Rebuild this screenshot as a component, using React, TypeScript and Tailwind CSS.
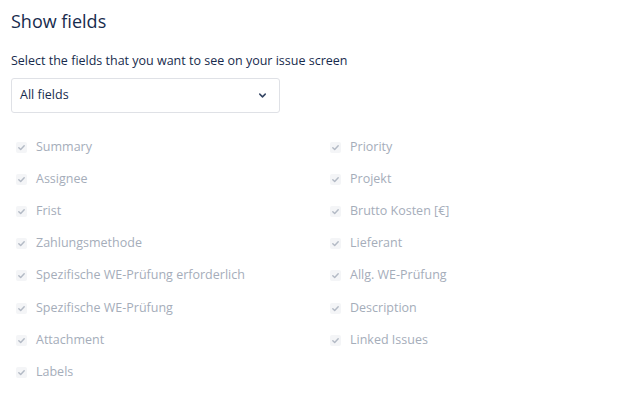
import { ChevronDown } from "lucide-react";

const leftFields = [
  "Summary",
  "Assignee",
  "Frist",
  "Zahlungsmethode",
  "Spezifische WE-Prüfung erforderlich",
  "Spezifische WE-Prüfung",
  "Attachment",
  "Labels",
];

const rightFields = [
  "Priority",
  "Projekt",
  "Brutto Kosten [€]",
  "Lieferant",
  "Allg. WE-Prüfung",
  "Description",
  "Linked Issues",
];

const FieldCheck = ({ label }: { label: string }) => (
  <div className="flex h-[32.2px] items-center gap-[9px] pl-[5px]">
    <span className="flex h-[11px] w-[11px] items-center justify-center rounded-[2px] bg-[#f4f5f7]">
      <svg viewBox="0 0 10 10" className="h-[9px] w-[9px]">
        <path d="M2 5.2 L4.1 7.2 L8 3" fill="none" stroke="#b3bac5" strokeWidth="1.6" strokeLinecap="round" strokeLinejoin="round" />
      </svg>
    </span>
    <span className="text-[12.5px] text-[#a5adba]">{label}</span>
  </div>
);

const App = () => {
  return (
    <div className="min-h-screen bg-white px-[11px] pt-[8px] font-['Open_Sans',sans-serif] text-[#172b4d]">
      <h2 className="text-[18px] leading-[26px] text-[#172b4d]">Show fields</h2>

      <p className="mt-[19px] text-[12.5px] leading-[16px]">
        Select the fields that you want to see on your issue screen
      </p>

      <div className="mt-[9px] flex h-[35px] w-[269px] items-center justify-between rounded-[3px] border border-[#dfe1e6] pl-[8px] pr-[11px]">
        <span className="text-[12.5px]">All fields</span>
        <ChevronDown className="h-[11px] w-[11px]" strokeWidth={3.2} color="#344563" />
      </div>

      <div className="mt-[18px] flex">
        <div className="flex w-[314px] flex-col">
          {leftFields.map((f) => (
            <FieldCheck key={f} label={f} />
          ))}
        </div>
        <div className="flex flex-col">
          {rightFields.map((f) => (
            <FieldCheck key={f} label={f} />
          ))}
        </div>
      </div>
    </div>
  );
};

export default App;
